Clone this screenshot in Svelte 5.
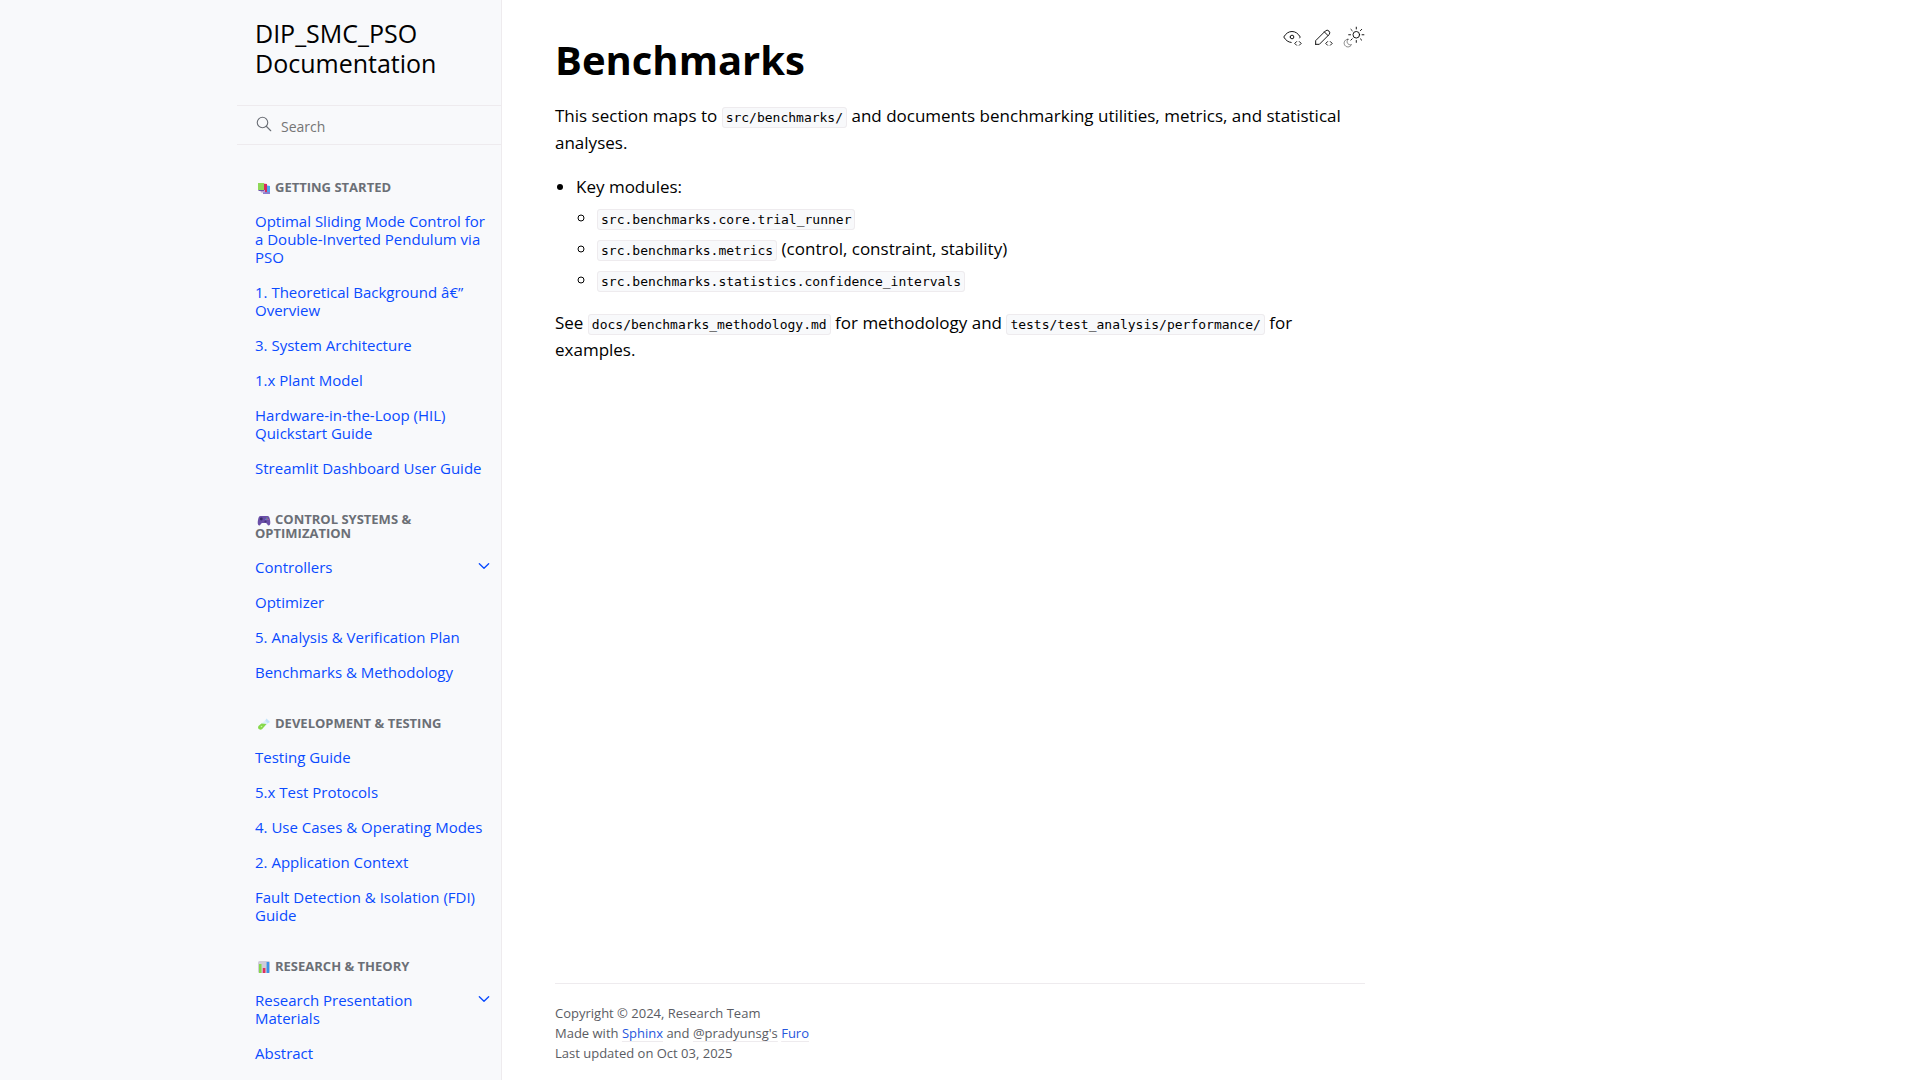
<script>
  const sections = [
    {
      icon: 'books',
      title: 'Getting Started',
      items: [
        { text: 'Optimal Sliding Mode Control for a Double-Inverted Pendulum via PSO' },
        { text: '1. Theoretical Background â€” Overview' },
        { text: '3. System Architecture' },
        { text: '1.x Plant Model' },
        { text: 'Hardware-in-the-Loop (HIL) Quickstart Guide' },
        { text: 'Streamlit Dashboard User Guide' }
      ]
    },
    {
      icon: 'gamepad',
      title: 'Control Systems & Optimization',
      items: [
        { text: 'Controllers', children: true },
        { text: 'Optimizer' },
        { text: '5. Analysis & Verification Plan' },
        { text: 'Benchmarks & Methodology' }
      ]
    },
    {
      icon: 'tube',
      title: 'Development & Testing',
      items: [
        { text: 'Testing Guide' },
        { text: '5.x Test Protocols' },
        { text: '4. Use Cases & Operating Modes' },
        { text: '2. Application Context' },
        { text: 'Fault Detection & Isolation (FDI) Guide' }
      ]
    },
    {
      icon: 'chart',
      title: 'Research & Theory',
      items: [
        { text: 'Research Presentation Materials', children: true },
        { text: 'Abstract' }
      ]
    }
  ];
</script>

<div class="page">
  <aside class="sidebar">
    <div class="sidebar-inner">
      <a class="brand" href="#home">DIP_SMC_PSO Documentation</a>

      <form class="search" role="search">
        <svg class="search-icon" viewBox="0 0 24 24" aria-hidden="true">
          <circle cx="10" cy="10" r="7" />
          <path d="M21 21l-6-6" />
        </svg>
        <input type="search" placeholder="Search" aria-label="Search" />
      </form>

      <nav class="tree" aria-label="Documentation">
        {#each sections as section}
          <p class="caption">
            <svg class="emoji" viewBox="0 0 14 14" aria-hidden="true">
              {#if section.icon === 'books'}
                <path fill="#4aa8f0" d="M8 4l5 1v8H6v-2z" />
                <path fill="#8a7fd0" d="M6 11h7v2H6z" />
                <path fill="#d8285f" d="M6 2.500l4 .5v8H5z" />
                <path fill="#b9a0d8" d="M3 9h5v2.500H4z" />
                <path fill="#8fd858" d="M1 2h6v7H1z" />
                <path fill="#6a55a8" d="M1 9h6v1H2z" />
              {:else if section.icon === 'gamepad'}
                <path fill="#6a4fa8" d="M3.500 3h7c1.500 0 2 1.500 2.500 4 .5 2.500 .5 5-1 5.500-1.500 .3-2-2.500-3-2.500H5c-1 0-1.500 2.800-3 2.500C.5 12 .5 9.500 1 7c.5-2.500 1-4 2.500-4z" />
                <circle fill="#3a2c68" cx="4.300" cy="6" r="1.400" />
                <circle fill="#46337a" cx="8.500" cy="8.500" r="1.100" />
                <circle fill="#8fd858" cx="10" cy="5" r=".6" />
                <circle fill="#e86a90" cx="11" cy="6.500" r=".6" />
                <circle fill="#5ab0f0" cx="9" cy="6.300" r=".6" />
              {:else if section.icon === 'tube'}
                <path fill="#c3e4fa" d="M8 4l1.500-2.500L13 5l-2.500 1.500z" />
                <path fill="#dff0fb" d="M8 3.500l3 3-6 5.500-3.500-3z" />
                <path fill="#86d94a" d="M1.500 9l3-2.500 5 .5L5 12.200c-2.500 1.500-5-1-3.500-3.200z" />
                <circle fill="#c8f59a" cx="4.500" cy="9.500" r=".8" />
              {:else}
                <rect fill="#cfccd8" x="1" y="1" width="12" height="12" rx="1.500" />
                <rect fill="#86d94a" x="2" y="4" width="2.500" height="9" />
                <rect fill="#e0305f" x="5.800" y="8" width="2.600" height="5" />
                <rect fill="#3a92e8" x="9.600" y="2" width="2.600" height="11" />
              {/if}
            </svg>{section.title}
          </p>
          <ul>
            {#each section.items as item}
              <li>
                <a href="#doc">{item.text}</a>
                {#if item.children}
                  <button type="button" aria-label="Toggle navigation of {item.text}">
                    <svg viewBox="0 0 24 24" aria-hidden="true"><path d="M5 8.500l7 7 7-7" /></svg>
                  </button>
                {/if}
              </li>
            {/each}
          </ul>
        {/each}
      </nav>
    </div>
  </aside>

  <main class="main">
    <article>
      <div class="title-row">
        <h1>Benchmarks</h1>
        <div class="actions">
          <a href="#source" aria-label="View this page">
            <svg viewBox="0 0 24 24" aria-hidden="true">
              <path d="M10 12a2 2 0 1 0 4 0a2 2 0 0 0-4 0" />
              <path d="M11.110 17.958c-3.209-.307-5.910-2.293-8.110-5.958c2.400-4 5.400-6 9-6c3.600 0 6.600 2 9 6c-.21 .352-.427 .688-.647 1.008" />
              <path d="M20 21l2-2l-2-2" />
              <path d="M17 17l-2 2l2 2" />
            </svg>
          </a>
          <a href="#edit" aria-label="Edit this page">
            <svg viewBox="0 0 24 24" aria-hidden="true">
              <path d="M4 20h4l10.500-10.500a2.828 2.828 0 1 0-4-4l-10.500 10.500v4" />
              <path d="M13.500 6.500l4 4" />
              <path d="M20 21l2-2l-2-2" />
              <path d="M17 17l-2 2l2 2" />
            </svg>
          </a>
          <button type="button" aria-label="Toggle light, dark or automatic theme">
            <svg viewBox="0 0 24 24" aria-hidden="true">
              <path class="moon" d="M5.411 14.504C5.471 14.504 5.532 14.504 5.591 14.504C3.639 16.319 4.383 19.569 6.931 20.352C7.693 20.586 8.512 20.551 9.250 20.252C8.023 23.207 4.056 23.725 2.110 21.184C.166 18.642 1.702 14.949 4.874 14.536C5.051 14.512 5.231 14.500 5.411 14.500Z" />
              <circle cx="14.500" cy="9.550" r="3.600" />
              <path d="M14.500 3.250v-2M14.500 15.850v2M10.044 5.094L8.630 3.680M19 14.050l1.414 1.414M8.200 9.550h-2M20.800 9.550h2M10.044 14.006L8.630 15.420M19 5.050l1.414-1.414" />
            </svg>
          </button>
        </div>
      </div>

      <p>
        This section maps to <code>src/benchmarks/</code> and documents benchmarking utilities, metrics, and statistical analyses.
      </p>

      <ul class="modules">
        <li>
          Key modules:
          <ul>
            <li><code>src.benchmarks.core.trial_runner</code></li>
            <li><code>src.benchmarks.metrics</code> (control, constraint, stability)</li>
            <li><code>src.benchmarks.statistics.confidence_intervals</code></li>
          </ul>
        </li>
      </ul>

      <p>
        See <code>docs/benchmarks_methodology.md</code> for methodology and <code>tests/test_analysis/performance/</code> for examples.
      </p>
    </article>

    <footer>
      <div>Copyright © 2024, Research Team</div>
      <div>
        Made with <a href="#sphinx">Sphinx</a> and <a class="plain" href="#author">@pradyunsg's</a>
        <a href="#furo">Furo</a>
      </div>
      <div>Last updated on Oct 03, 2025</div>
    </footer>
  </main>
</div>

<style>
  :global(body) {
    margin: 0;
    background: #fff;
    color: #000;
    font-family: 'Segoe UI', 'Open Sans', 'Noto Sans', sans-serif;
    font-size: 17px;
    line-height: 27px;
  }

  a {
    text-decoration: none;
  }

  button {
    padding: 0;
    border: 0;
    background: none;
    color: inherit;
    cursor: pointer;
  }

  svg {
    fill: none;
    stroke: currentColor;
    stroke-width: 1;
    stroke-linecap: round;
    stroke-linejoin: round;
  }

  .page {
    display: flex;
    min-height: 100vh;
  }

  .sidebar {
    position: sticky;
    top: 0;
    display: flex;
    justify-content: flex-end;
    box-sizing: border-box;
    flex: none;
    width: calc(50% - 458px);
    min-width: 265px;
    height: 100vh;
    overflow: hidden;
    background: #f8f9fb;
    border-right: 1px solid #eeebee;
  }

  .sidebar-inner {
    width: 264px;
  }

  .brand {
    display: block;
    padding: 18px 18px 26px;
    color: #000;
    font-size: 25px;
    line-height: 30px;
  }

  .search {
    display: flex;
    align-items: center;
    height: 38px;
    margin-top: 1px;
    padding-left: 18px;
    border-top: 1px solid #eeebee;
    border-bottom: 1px solid #eeebee;
    color: #6b6f76;
  }

  .search-icon {
    flex: none;
    width: 18px;
    height: 18px;
    margin-bottom: 2px;
    stroke-width: 1.5;
  }

  .search input {
    flex: 1;
    min-width: 0;
    padding: 4px 8px 0;
    border: 0;
    outline: 0;
    background: transparent;
    font: inherit;
    font-size: 14px;
    line-height: 20px;
  }

  .search input::placeholder {
    color: #757575;
    opacity: 1;
  }

  .tree {
    padding-top: 8px;
  }

  .caption {
    margin: 27px 18px 9px;
    color: #6b6f76;
    font-size: 13px;
    font-weight: 700;
    line-height: 14px;
    text-transform: uppercase;
  }

  .emoji {
    width: 14px;
    height: 14px;
    margin: -2px 4px -2px 2px;
    stroke: none;
    vertical-align: -1px;
  }

  .tree ul {
    margin: 0;
    padding: 0;
    list-style: none;
  }

  .tree li {
    display: flex;
    align-items: flex-start;
  }

  .tree a {
    flex: 1;
    padding: 9px 9px 8px 18px;
    color: #0a4bff;
    font-size: 15px;
    line-height: 18px;
  }

  .tree button {
    display: flex;
    justify-content: center;
    width: 35px;
    padding: 9px 0;
    color: #0a4bff;
  }

  .tree button svg {
    width: 16px;
    height: 16px;
    stroke-width: 2;
  }

  .main {
    display: flex;
    flex-direction: column;
    box-sizing: border-box;
    flex: 0 1 916px;
    min-width: 0;
    padding: 26px 53px 17px;
  }

  article {
    flex: 1;
  }

  .title-row {
    display: flex;
    align-items: flex-start;
    justify-content: space-between;
  }

  h1 {
    margin: 6px 0 15px;
    font-size: 40px;
    font-weight: 700;
    line-height: 55px;
  }

  .actions {
    display: flex;
    gap: 9px;
  }

  .actions a,
  .actions button {
    display: flex;
    color: #000;
  }

  .actions svg {
    width: 22px;
    height: 22px;
  }

  .moon {
    opacity: 0.5;
  }

  p {
    margin: 0 0 17px;
  }

  code {
    padding: 2px 3px;
    border: 1px solid #eeebee;
    border-radius: 3px;
    background: #f8f9fb;
    font-family: Consolas, 'DejaVu Sans Mono', monospace;
    font-size: 13px;
    line-height: 16px;
  }

  .modules {
    margin: 0 0 16px;
    padding-left: 21px;
  }

  .modules ul {
    margin: 0;
    padding-left: 21px;
  }

  .modules ul li {
    margin-top: 4px;
  }

  footer {
    padding-top: 19px;
    border-top: 1px solid #eeebee;
    color: #5a5c63;
    font-size: 13px;
    line-height: 20px;
  }

  footer a {
    color: #2757dd;
    text-decoration: underline;
    text-decoration-color: #eeebee;
    text-underline-offset: 3px;
  }

  footer .plain {
    color: inherit;
  }
</style>
